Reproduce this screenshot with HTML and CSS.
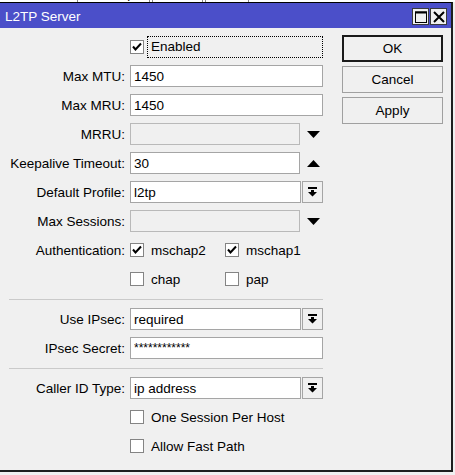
FILE: index.html
```html
<!DOCTYPE html>
<html>
<head>
    <link rel="stylesheet" href="styles.css">
</head>
<body>
    <div class="backdrop">
        <span class="tab">Nexthops</span>
        <span class="tab">Rules</span>
        <span class="tab">VRF</span>
    </div>
    <div class="window">
        <div class="titlebar">
            <span class="title">L2TP Server</span>
            <div class="title-buttons">
                <span class="tbtn">
                    <svg width="12" height="12" viewBox="0 0 12 12"><rect x="0.5" y="1" width="11" height="10.5" fill="none" stroke="#000" stroke-width="1"/><rect x="0" y="0.5" width="12" height="2" fill="#000"/></svg>
                </span>
                <span class="tbtn">
                    <svg width="12" height="12" viewBox="0 0 12 12"><path d="M1 1 L11 11 M11 1 L1 11" stroke="#000" stroke-width="2"/></svg>
                </span>
            </div>
        </div>
        <div class="content">
            <form class="fields">
                <div class="row first">
                    <span class="label"></span>
                    <span class="check"><svg width="12" height="12" viewBox="0 0 12 12"><path d="M2 5.5 L4.5 8.5 L10 2.5" fill="none" stroke="#000" stroke-width="2"/></svg></span>
                    <span class="focus">Enabled</span>
                </div>
                <div class="row">
                    <label class="label" for="mtu">Max MTU:</label>
                    <input class="field" type="text" id="mtu" value="1450">
                </div>
                <div class="row">
                    <label class="label" for="mru">Max MRU:</label>
                    <input class="field" type="text" id="mru" value="1450">
                </div>
                <div class="row">
                    <label class="label" for="mrru">MRRU:</label>
                    <input class="field short" type="text" id="mrru" disabled>
                    <svg class="arrow" width="13" height="7" viewBox="0 0 13 7"><polygon points="0,0 13,0 6.5,7" fill="#000"/></svg>
                </div>
                <div class="row">
                    <label class="label" for="keepalive">Keepalive Timeout:</label>
                    <input class="field short" type="text" id="keepalive" value="30">
                    <svg class="arrow" width="13" height="7" viewBox="0 0 13 7"><polygon points="0,7 13,7 6.5,0" fill="#000"/></svg>
                </div>
                <div class="row">
                    <label class="label" for="profile">Default Profile:</label>
                    <input class="field with-btn" type="text" id="profile" value="l2tp">
                    <span class="dd-btn"><svg width="9" height="10" viewBox="0 0 9 10"><rect x="0" y="0" width="9" height="2" fill="#000"/><polygon points="3,3 6,3 6,5 9,5 4.5,9.5 0,5 3,5" fill="#000"/></svg></span>
                </div>
                <div class="row">
                    <label class="label" for="sessions">Max Sessions:</label>
                    <input class="field short" type="text" id="sessions" disabled>
                    <svg class="arrow" width="13" height="7" viewBox="0 0 13 7"><polygon points="0,0 13,0 6.5,7" fill="#000"/></svg>
                </div>
                <div class="row">
                    <span class="label">Authentication:</span>
                    <span class="opt">
                        <span class="check"><svg width="12" height="12" viewBox="0 0 12 12"><path d="M2 5.5 L4.5 8.5 L10 2.5" fill="none" stroke="#000" stroke-width="2"/></svg></span>
                        mschap2
                    </span>
                    <span class="opt">
                        <span class="check"><svg width="12" height="12" viewBox="0 0 12 12"><path d="M2 5.5 L4.5 8.5 L10 2.5" fill="none" stroke="#000" stroke-width="2"/></svg></span>
                        mschap1
                    </span>
                </div>
                <div class="row">
                    <span class="label"></span>
                    <span class="opt"><span class="check"></span>chap</span>
                    <span class="opt"><span class="check"></span>pap</span>
                </div>
                <div class="sep"></div>
                <div class="row">
                    <label class="label" for="ipsec">Use IPsec:</label>
                    <input class="field with-btn" type="text" id="ipsec" value="required">
                    <span class="dd-btn"><svg width="9" height="10" viewBox="0 0 9 10"><rect x="0" y="0" width="9" height="2" fill="#000"/><polygon points="3,3 6,3 6,5 9,5 4.5,9.5 0,5 3,5" fill="#000"/></svg></span>
                </div>
                <div class="row">
                    <label class="label" for="secret">IPsec Secret:</label>
                    <input class="field secret" type="text" id="secret" value="************">
                </div>
                <div class="sep"></div>
                <div class="row">
                    <label class="label" for="callerid">Caller ID Type:</label>
                    <input class="field with-btn" type="text" id="callerid" value="ip address">
                    <span class="dd-btn"><svg width="9" height="10" viewBox="0 0 9 10"><rect x="0" y="0" width="9" height="2" fill="#000"/><polygon points="3,3 6,3 6,5 9,5 4.5,9.5 0,5 3,5" fill="#000"/></svg></span>
                </div>
                <div class="row">
                    <span class="label"></span>
                    <span class="opt wide"><span class="check"></span>One Session Per Host</span>
                </div>
                <div class="row">
                    <span class="label"></span>
                    <span class="opt wide"><span class="check"></span>Allow Fast Path</span>
                </div>
            </form>
            <div class="actions">
                <button type="button" class="btn default">OK</button>
                <button type="button" class="btn">Cancel</button>
                <button type="button" class="btn">Apply</button>
            </div>
        </div>
    </div>
</body>
</html>
```

FILE: styles.css
```css
body {
    margin: 0;
    background-color: #f0f0f0;
    font-family: "Liberation Sans", Arial, sans-serif;
    font-size: 13.5px;
    color: #000;
}
.backdrop {
    height: 2px;
    background-color: #fff;
    overflow: hidden;
    display: flex;
    align-items: flex-end;
    padding-left: 77px;
    font-size: 13px;
}
.tab {
    flex-shrink: 0;
    height: 16px;
    line-height: 15px;
    padding: 0 8px;
    margin-right: 2px;
    border-left: 1px solid #888;
    border-right: 1px solid #888;
}
.window {
    width: 451px;
    background-color: #f0f0f0;
    border-top: 1px solid #000;
    border-right: 2px solid #1e1e1e;
    border-bottom: 2px solid #1e1e1e;
}
.titlebar {
    display: flex;
    align-items: center;
    justify-content: space-between;
    height: 25px;
    padding: 0 4px 0 5px;
    background-color: #4b4fc9;
    color: #fff;
    font-size: 13.5px;
}
.title {
    padding-top: 2px;
}
.title-buttons {
    display: flex;
    gap: 1px;
    margin-top: 2px;
}
.tbtn {
    box-sizing: border-box;
    width: 17px;
    height: 17px;
    border: 1px solid #3a3a3a;
    background-color: #f0f0f0;
    display: flex;
    align-items: center;
    justify-content: center;
}
.content {
    box-sizing: border-box;
    height: 442px;
    display: flex;
    padding-top: 7px;
}
.fields {
    width: 323px;
    margin: 0;
    display: flex;
    flex-direction: column;
    gap: 7px;
}
.row {
    display: flex;
    align-items: center;
    height: 22px;
}
.row.first {
    height: 23px;
}
.label {
    flex-shrink: 0;
    width: 125px;
    margin-right: 5px;
    text-align: right;
    white-space: nowrap;
}
.field {
    box-sizing: border-box;
    width: 193px;
    height: 22px;
    margin: 0;
    padding: 0 3px;
    border: 1px solid #a5a5a5;
    background-color: #fff;
    font: inherit;
    color: #000;
    outline: none;
}
.field.secret {
    font-size: 12px;
}
.field.short {
    width: 170px;
}
.field.with-btn {
    width: 171px;
}
.field:disabled {
    background-color: #f0f0f0;
    border-color: #b9b9b9;
}
.arrow {
    margin-left: 7px;
}
.dd-btn {
    box-sizing: border-box;
    width: 21px;
    height: 22px;
    margin-left: 1px;
    border: 1px solid #a5a5a5;
    background-color: #f0f0f0;
    display: flex;
    align-items: center;
    justify-content: center;
}
.check {
    box-sizing: border-box;
    flex-shrink: 0;
    width: 14px;
    height: 14px;
    border: 1px solid #848484;
    background-color: #fff;
    display: flex;
    align-items: center;
    justify-content: center;
}
.focus {
    box-sizing: border-box;
    width: 176px;
    height: 22px;
    margin-left: 3px;
    padding-left: 3px;
    line-height: 20px;
    border: 1px dotted #000;
}
.opt {
    display: flex;
    align-items: center;
    width: 95px;
    white-space: nowrap;
}
.opt .check {
    margin-right: 7px;
}
.opt.wide {
    width: 190px;
}
.sep {
    width: 314px;
    height: 1px;
    margin: 2px 0 1px 9px;
    background-color: #cacaca;
}
.actions {
    display: flex;
    flex-direction: column;
    gap: 4px;
    margin-left: 19px;
}
.btn {
    box-sizing: border-box;
    width: 101px;
    height: 27px;
    padding: 0;
    font: inherit;
    color: #000;
    background-color: #f0f0f0;
    border: 1px solid #a0a0a0;
}
.btn.default {
    border: 2px solid #1a1a1a;
}
```
